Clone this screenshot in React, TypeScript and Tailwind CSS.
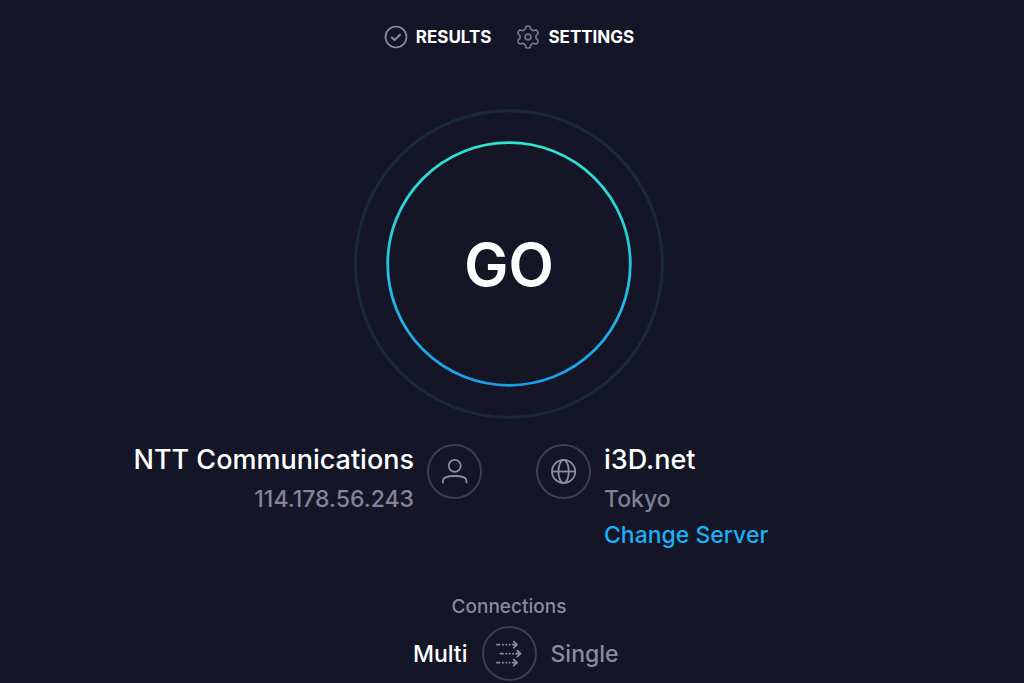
import { useState } from "react";
import type { ReactNode } from "react";

// Outline of a six-lobed gear around (12, 12), one lobe pointing straight up.
const gearOutline =
  Array.from({ length: 120 }, (_, i) => {
    const angle = (i / 120) * 2 * Math.PI;
    const radius = 9.5 + (1.5 * Math.tanh(2.2 * Math.cos(6 * angle))) / Math.tanh(2.2);
    const x = 12 + radius * Math.sin(angle);
    const y = 12 - radius * Math.cos(angle);
    return `${i === 0 ? "M" : "L"}${x.toFixed(2)} ${y.toFixed(2)}`;
  }).join("") + "Z";

function CheckCircleIcon() {
  return (
    <svg aria-hidden="true" className="size-6 text-[#8b8b9f]" viewBox="0 0 24 24" fill="none" stroke="currentColor" strokeWidth="1.7" strokeLinecap="round" strokeLinejoin="round">
      <circle cx="12" cy="12" r="10.5" />
      <path d="M7.8 12.6l2.8 2.5 5.4-5.3" strokeWidth="2" />
    </svg>
  );
}

function GearIcon() {
  return (
    <svg aria-hidden="true" className="size-6 text-[#77778b]" viewBox="0 0 24 24" fill="none" stroke="currentColor" strokeWidth="1.7" strokeLinejoin="round">
      <path d={gearOutline} />
      <circle cx="12" cy="12" r="2.9" />
    </svg>
  );
}

function UserIcon() {
  return (
    <svg aria-hidden="true" className="size-7" viewBox="0 0 28 28" fill="none" stroke="currentColor" strokeWidth="1.8" strokeLinecap="round">
      <circle cx="13.7" cy="7.8" r="6" />
      <path d="M1.9 24.5V23c0-3.5 4.5-5 11.8-5s11.8 1.5 11.8 5v1.5" />
    </svg>
  );
}

function GlobeIcon() {
  return (
    <svg aria-hidden="true" className="size-7" viewBox="0 0 28 28" fill="none" stroke="currentColor" strokeWidth="1.8">
      <circle cx="13.6" cy="13.5" r="11.6" />
      <ellipse cx="13.6" cy="13.5" rx="5.2" ry="11.6" />
      <path d="M2 13.5h23.2" />
    </svg>
  );
}

function ArrowsIcon() {
  return (
    <svg aria-hidden="true" className="size-7" viewBox="0 0 28 28" fill="none" stroke="currentColor" strokeWidth="1.8" strokeLinecap="round" strokeLinejoin="round">
      {[
        [2, 4.7],
        [5.5, 13.7],
        [2, 22.7],
      ].map(([x, y]) => (
        <g key={y} transform={`translate(${x} ${y})`}>
          <path d="M0 0h2.4M5.800 0h.2M9.2 0h.2M12.5 0h.2M15.8 0h4M16.8-3L20 0l-3.2 3" />
        </g>
      ))}
    </svg>
  );
}

function Badge({ children }: { children: ReactNode }) {
  return (
    <span className="flex size-[55px] shrink-0 items-center justify-center rounded-full border-2 border-[#3e3e4f] text-[#8d8da2]">
      {children}
    </span>
  );
}

function GoButton() {
  return (
    <button type="button" className="grid size-[310px] cursor-pointer place-items-center rounded-full">
      <svg aria-hidden="true" className="col-start-1 row-start-1 size-full" viewBox="0 0 310 310" fill="none">
        <defs>
          <linearGradient id="ring" x1="0" y1="0" x2="0" y2="1">
            <stop offset="0" stopColor="#31e5cf" />
            <stop offset="0.5" stopColor="#25c4df" />
            <stop offset="1" stopColor="#1d9bea" />
          </linearGradient>
        </defs>
        <circle cx="155" cy="155" r="153.4" stroke="#192938" strokeWidth="3.2" />
        <circle cx="155" cy="155" r="121.3" fill="#141625" stroke="url(#ring)" strokeWidth="2.8" />
      </svg>
      <span className="col-start-1 row-start-1 text-[59px] leading-none font-semibold text-white">GO</span>
    </button>
  );
}

export default function App() {
  const [multi, setMulti] = useState(true);

  return (
    <main className="flex min-h-screen flex-col items-center bg-[#141526] pt-6 pr-[6px] font-['Inter','Noto_Sans',sans-serif] text-white">
      <nav className="flex items-center gap-[25px] text-[17px] leading-[26px] font-bold">
        <a href="#results" className="flex items-center gap-2">
          <CheckCircleIcon />
          RESULTS
        </a>
        <a href="#settings" className="flex items-center gap-2">
          <GearIcon />
          SETTINGS
        </a>
      </nav>

      <div className="mt-[59px]">
        <GoButton />
      </div>

      <section className="mt-[25px] grid w-full grid-cols-2 gap-[54px]">
        <div className="flex items-start justify-end gap-[13px] text-right">
          <div>
            <h2 className="text-[27px] leading-8 font-medium">NTT Communications</h2>
            <p className="mt-2 text-[23px] leading-[30px] font-medium text-[#83839a]">114.178.56.243</p>
          </div>
          <Badge>
            <UserIcon />
          </Badge>
        </div>
        <div className="flex items-start gap-[13px]">
          <Badge>
            <GlobeIcon />
          </Badge>
          <div>
            <h2 className="text-[27px] leading-8 font-medium">i3D.net</h2>
            <p className="mt-2 text-[23px] leading-[30px] font-medium text-[#7f7f95]">Tokyo</p>
            <a href="#servers" className="mt-[6px] block text-[23px] leading-[30px] font-medium text-[#1cb0f6]">
              Change Server
            </a>
          </div>
        </div>
      </section>

      <section className="mt-[43px] w-full text-[#8a8a9f]">
        <h3 className="text-center text-[19px] leading-7 font-medium">Connections</h3>
        <div className="mt-[5px] grid grid-cols-[1fr_auto_1fr] items-center gap-[14px] text-[23px] leading-8 font-medium">
          <button type="button" onClick={() => setMulti(true)} className={multi ? "justify-self-end text-white" : "justify-self-end"}>
            Multi
          </button>
          <button type="button" aria-label="Toggle connection mode" onClick={() => setMulti(!multi)}>
            <Badge>
              <ArrowsIcon />
            </Badge>
          </button>
          <button type="button" onClick={() => setMulti(false)} className={multi ? "justify-self-start" : "justify-self-start text-white"}>
            Single
          </button>
        </div>
      </section>
    </main>
  );
}
